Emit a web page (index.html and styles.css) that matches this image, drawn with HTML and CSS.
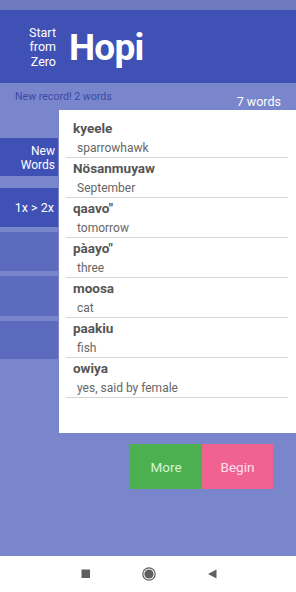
FILE: index.html
```html
<!DOCTYPE html>
<html>
<head>
<meta charset="utf-8">
<link rel="stylesheet" href="styles.css">
</head>
<body>
<div class="screen">
  <div class="statusbar"></div>
  <header class="header">
    <div class="tagline">Start<br>from<br>Zero</div>
    <div class="title">Hopi</div>
  </header>
  <main class="main">
    <div class="info">
      <span class="record">New record! 2 words</span>
      <span class="count">7 words</span>
    </div>
    <div class="content">
      <nav class="side">
        <div class="side-btn side-btn--active side-btn--first">New<br>Words</div>
        <div class="side-btn side-btn--active">1x &gt; 2x</div>
        <div class="side-btn"></div>
        <div class="side-btn side-btn--tall"></div>
        <div class="side-btn side-btn--short"></div>
      </nav>
      <section class="card">
        <ul class="words">
          <li class="word"><div class="term">kyeele</div><div class="meaning">sparrowhawk</div></li>
          <li class="word"><div class="term">Nösanmuyaw</div><div class="meaning">September</div></li>
          <li class="word"><div class="term">qaavo"</div><div class="meaning">tomorrow</div></li>
          <li class="word"><div class="term">pàayo"</div><div class="meaning">three</div></li>
          <li class="word"><div class="term">moosa</div><div class="meaning">cat</div></li>
          <li class="word"><div class="term">paakiu</div><div class="meaning">fish</div></li>
          <li class="word"><div class="term">owiya</div><div class="meaning">yes, said by female</div></li>
        </ul>
      </section>
    </div>
    <div class="actions">
      <button class="btn btn--more">More</button>
      <button class="btn btn--begin">Begin</button>
    </div>
  </main>
  <footer class="navbar">
    <svg class="nav-icon" width="10" height="10" viewBox="0 0 10 10"><rect x="0.5" y="0.5" width="8.5" height="8.5" fill="#5f5f5f"/></svg>
    <svg class="nav-icon" width="14" height="14" viewBox="0 0 14 14"><circle cx="7" cy="7" r="6.2" fill="none" stroke="#5f5f5f" stroke-width="1.2"/><circle cx="7" cy="7" r="4.6" fill="#5f5f5f"/></svg>
    <svg class="nav-icon" width="10" height="10" viewBox="0 0 10 10"><polygon points="9.5,0.5 9.5,9.5 1,5" fill="#5f5f5f"/></svg>
  </footer>
</div>
</body>
</html>
```
FILE: styles.css
```css
* { box-sizing: border-box; }
html, body { margin: 0; padding: 0; }
body {
  font-family: Roboto, "Noto Sans", "Liberation Sans", sans-serif;
  width: 296px;
  height: 592px;
  overflow: hidden;
}
.screen {
  display: flex;
  flex-direction: column;
  height: 592px;
  background: #7986cb;
}
.statusbar {
  height: 10px;
  background: #6d7abb;
}
.header {
  height: 73px;
  background: #3f51b5;
  display: flex;
  align-items: center;
  padding-left: 26px;
  color: #fff;
}
.tagline {
  font-size: 12.5px;
  line-height: 14.5px;
  text-align: right;
  width: 30px;
  margin-top: 2px;
}
.title {
  font-size: 37px;
  font-weight: 700;
  margin-left: 13px;
  margin-top: 1px;
  letter-spacing: -0.8px;
}
.main {
  flex: 1;
  display: flex;
  flex-direction: column;
}
.info {
  height: 27px;
  display: flex;
  justify-content: space-between;
  padding: 0 15px 0 15px;
}
.record {
  font-size: 10.6px;
  color: #3949ab;
  margin-top: 7px;
}
.count {
  font-size: 12.5px;
  color: #fff;
  align-self: flex-end;
  margin-bottom: 1px;
}
.content {
  display: flex;
  gap: 1px;
}
.side {
  width: 58px;
  padding-top: 28px;
  display: flex;
  flex-direction: column;
  gap: 5px;
}
.side-btn {
  height: 39px;
  background: #5c6bbd;
  color: #fff;
  display: flex;
  align-items: center;
  justify-content: flex-end;
  text-align: right;
  padding-right: 4px;
  font-size: 12.5px;
  line-height: 14px;
}
.side-btn--active { background: #3f51b5; }
.side-btn--first {
  height: 38px;
  margin-bottom: 7px;
  font-size: 12px;
  padding-top: 2px;
  padding-right: 3px;
}
.side-btn--tall { height: 40px; }
.side-btn--short { height: 38px; }
.card {
  flex: 1;
  height: 323px;
  background: #fff;
  padding-top: 8px;
}
.words {
  list-style: none;
  margin: 0;
  padding: 0;
}
.word {
  margin: 0 8px 0 7px;
  height: 40px;
  border-bottom: 1.5px solid #d4d4d4;
}
.term {
  font-size: 13.5px;
  font-weight: 700;
  color: #555;
  padding-left: 7px;
  line-height: 20px;
}
.meaning {
  font-size: 12px;
  color: #666;
  padding-left: 11px;
  line-height: 17px;
  padding-top: 2px;
}
.actions {
  display: flex;
  margin-top: 11px;
  padding-left: 130px;
}
.btn {
  border: 0;
  margin: 0;
  height: 45px;
  font-family: inherit;
  font-size: 13.5px;
  padding: 0;
}
.btn--more {
  width: 72px;
  background: #4caf50;
  color: #d6f5d0;
}
.btn--begin {
  width: 71px;
  background: #f06292;
  color: #fde0ea;
}
.navbar {
  height: 36px;
  background: #fff;
  display: flex;
  align-items: center;
  justify-content: center;
  gap: 51px;
  padding-left: 2px;
}
.nav-icon { display: block; }
```
